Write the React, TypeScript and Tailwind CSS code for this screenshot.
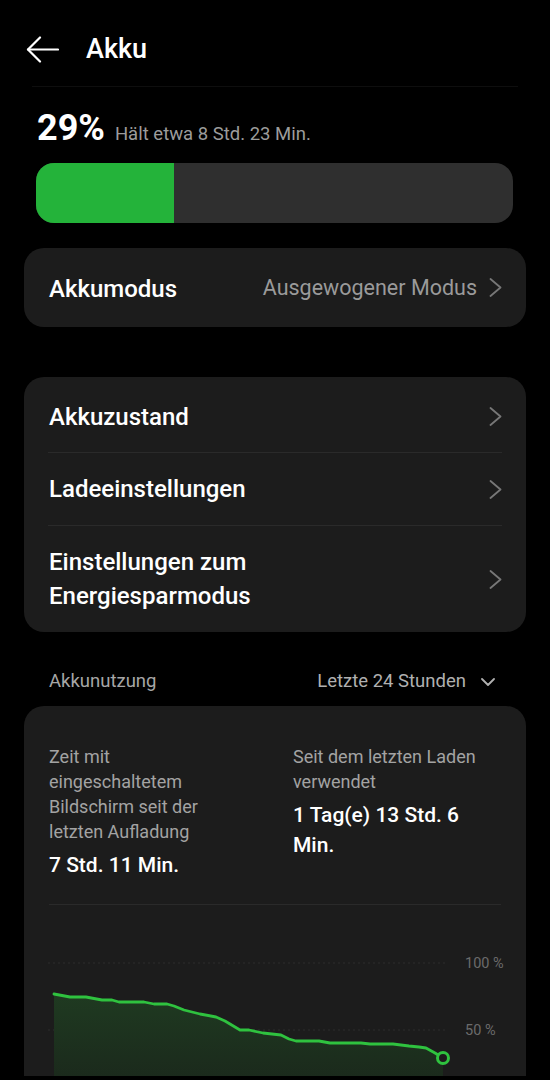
import React from "react"

const font = { fontFamily: "Roboto, 'Noto Sans', sans-serif" }

const ChevronRight = () => (
  <svg width="13" height="19" viewBox="0 0 13 19" fill="none" className="shrink-0">
    <polyline points="1.5,1 11.5,9.5 1.5,18" stroke="#777777" strokeWidth="1.8" strokeLinecap="round" strokeLinejoin="round" />
  </svg>
)

const BackArrow = () => (
  <svg width="33" height="27" viewBox="0 0 33 27" fill="none">
    <line x1="2" y1="13.5" x2="32" y2="13.5" stroke="#ffffff" strokeWidth="2.2" strokeLinecap="round" />
    <polyline points="14,1.5 2,13.5 14,25.5" stroke="#ffffff" strokeWidth="2.2" strokeLinecap="round" strokeLinejoin="round" />
  </svg>
)

// chart points in card coordinates (viewBox 0 0 501 172)
const points: [number, number][] = [
  [30, 89], [46, 92], [62, 92], [78, 95], [88, 95], [95, 97], [120, 97], [130, 99],
  [143, 99], [150, 101], [160, 105], [176, 109], [192, 112], [201, 116], [216, 125],
  [225, 125], [239, 128], [257, 130], [265, 134], [272, 136], [295, 136], [306, 138],
  [337, 138], [346, 139], [369, 139], [385, 141], [395, 142], [402, 143], [411, 148],
  [419, 153],
]

function UsageChart() {
  const line = points.map(([x, y], i) => `${i === 0 ? "M" : "L"}${x} ${y}`).join(" ")
  const area = `${line} L419 172 L30 172 Z`
  return (
    <svg viewBox="0 0 501 171" width="501" height="171" className="block">
      <defs>
        <linearGradient id="fill" x1="0" y1="0" x2="0" y2="1">
          <stop offset="0%" stopColor="#1f3a21" />
          <stop offset="100%" stopColor="#1b2a1c" />
        </linearGradient>
      </defs>
      <line x1="24" y1="58" x2="423" y2="58" stroke="#2c2c2c" strokeWidth="1" strokeDasharray="2 3" />
      <line x1="24" y1="125" x2="423" y2="125" stroke="#2c2c2c" strokeWidth="1" strokeDasharray="2 3" />
      <text x="441" y="63" fontSize="14.5" fill="#6b6b6b" style={font}>100 %</text>
      <text x="441" y="130" fontSize="14.5" fill="#6b6b6b" style={font}>50 %</text>
      <path d={area} fill="url(#fill)" />
      <path d={line} fill="none" stroke="#2fc23f" strokeWidth="2.8" strokeLinejoin="round" strokeLinecap="round" />
      <circle cx="419" cy="153" r="5.5" fill="#1c1c1c" stroke="#2fc23f" strokeWidth="3" />
    </svg>
  )
}

export default function App() {
  return (
    <div className="w-[550px] h-[1080px] overflow-hidden bg-black text-white" style={font}>
      {/* Header */}
      <div className="h-[87px] pt-[27px] border-b border-[#0e0e0e] mx-[32px]">
        <div className="flex items-center h-[44px] -ml-[6px] gap-[27px]">
          <BackArrow />
          <span className="text-[27px] font-medium leading-none">Akku</span>
        </div>
      </div>

      {/* Battery level */}
      <div className="flex items-baseline mt-[23px] ml-[37px] gap-[10px] leading-none">
        <span className="text-[36px] font-bold">29%</span>
        <span className="text-[18.5px] text-[#9c9c9c]">Hält etwa 8 Std. 23 Min.</span>
      </div>
      <div className="mt-[17px] ml-[36px] mr-[37px] h-[60px] rounded-[18px] bg-[#2f2f2f] overflow-hidden flex">
        <div className="w-[29%] h-full bg-[#24b33a]" />
      </div>

      {/* Akkumodus */}
      <div className="mt-[25px] mx-[24px] h-[79px] rounded-[20px] bg-[#1c1c1c] flex items-center justify-between pl-[25px] pr-[24px]">
        <span className="text-[24px] font-medium pt-[2px]">Akkumodus</span>
        <div className="flex items-center gap-[12px]">
          <span className="text-[21.5px] text-[#9a9a9a] pt-[2px]">Ausgewogener Modus</span>
          <ChevronRight />
        </div>
      </div>

      {/* Settings list */}
      <div className="mt-[50px] mx-[24px] rounded-[20px] bg-[#1c1c1c] px-[24px]">
        <div className="h-[76px] flex items-center justify-between pl-[1px] pt-[4px] border-b border-[#2a2a2a]">
          <span className="text-[24px] font-medium">Akkuzustand</span>
          <ChevronRight />
        </div>
        <div className="h-[73px] flex items-center justify-between pl-[1px] border-b border-[#2a2a2a]">
          <span className="text-[24px] font-medium">Ladeeinstellungen</span>
          <ChevronRight />
        </div>
        <div className="h-[106px] flex items-center justify-between pl-[1px]">
          <span className="text-[24px] font-medium leading-[34px]">
            Einstellungen zum
            <br />
            Energiesparmodus
          </span>
          <ChevronRight />
        </div>
      </div>

      {/* Usage header */}
      <div className="mt-[26px] h-[48px] flex items-center justify-between pl-[49px] pr-[55px]">
        <span className="text-[18.5px] text-[#a6a6a6]">Akkunutzung</span>
        <div className="flex items-center gap-[15px]">
          <span className="text-[18.5px] text-[#b0b0b0]">Letzte 24 Stunden</span>
          <svg width="14" height="8" viewBox="0 0 14 8" fill="none">
            <polyline points="1,1 7,7 13,1" stroke="#b0b0b0" strokeWidth="1.8" strokeLinecap="round" strokeLinejoin="round" />
          </svg>
        </div>
      </div>

      {/* Usage card */}
      <div className="mx-[24px] rounded-t-[20px] bg-[#1c1c1c]">
        <div className="px-[25px] pt-[38px]">
          <div className="grid grid-cols-[172px_1fr] gap-x-[72px] pb-[24px] border-b border-[#2a2a2a]">
            <div>
              <p className="text-[18px] leading-[25px] text-[#a3a3a3]">
                Zeit mit eingeschaltetem Bildschirm seit der letzten Aufladung
              </p>
              <p className="mt-[6px] text-[21px] leading-[30px] font-medium">7 Std. 11 Min.</p>
            </div>
            <div>
              <p className="text-[18px] leading-[25px] text-[#a3a3a3]">Seit dem letzten Laden verwendet</p>
              <p className="mt-[6px] text-[21px] leading-[30px] font-medium">1 Tag(e) 13 Std. 6 Min.</p>
            </div>
          </div>
        </div>
        <UsageChart />
      </div>
    </div>
  )
}
